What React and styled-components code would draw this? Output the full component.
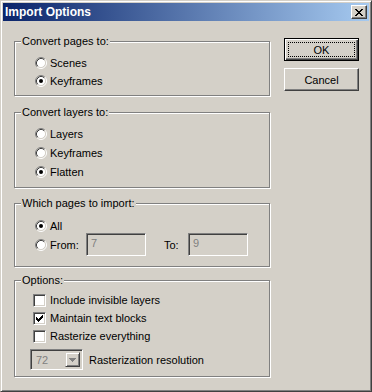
import styled, { createGlobalStyle } from "styled-components";

const GlobalStyle = createGlobalStyle`
  body {
    margin: 0;
    background: #d4d0c8;
    font-family: "Liberation Sans", Arial, sans-serif;
    font-size: 11px;
    color: #000;
  }
`;

const CHECK = [
  "......X",
  ".....XX",
  "X...XXX",
  "XX.XXX.",
  "XXXXX..",
  ".XXX...",
  "..X....",
];

const CROSS = [
  "XX....XX",
  ".XX..XX.",
  "..XXXX..",
  "...XX...",
  "..XXXX..",
  ".XX..XX.",
  "XX....XX",
];

const Pixels = ({ rows, color, w, h }) => (
  <svg width={w} height={h} viewBox={`0 0 ${w} ${h}`} shapeRendering="crispEdges">
    {rows.map((row, y) =>
      row.split("").map((c, x) =>
        c === "X" ? <rect key={`${x}-${y}`} x={x} y={y} width="1" height="1" fill={color} /> : null
      )
    )}
  </svg>
);

const RadioMark = ({ checked }) => (
  <RadioBox>
    <svg width="12" height="12" viewBox="0 0 12 12">
      <circle cx="6" cy="6" r="4.5" fill="#fff" />
      <path d="M2.11 9.89 A5.5 5.5 0 0 1 9.89 2.11" stroke="#808080" fill="none" />
      <path d="M9.89 2.11 A5.5 5.5 0 0 1 2.11 9.89" stroke="#fff" fill="none" />
      <path d="M2.82 9.18 A4.5 4.5 0 0 1 9.18 2.82" stroke="#404040" fill="none" />
      <path d="M9.18 2.82 A4.5 4.5 0 0 1 2.82 9.18" stroke="#d4d0c8" fill="none" />
      {checked && <circle cx="6" cy="6" r="2" fill="#000" />}
    </svg>
  </RadioBox>
);

const Radio = ({ checked, h, children }) => (
  <Row h={h}>
    <RadioMark checked={checked} />
    {children}
  </Row>
);

const Check = ({ checked, children }) => (
  <Row h={18}>
    <CheckBox>{checked && <Pixels rows={CHECK} color="#000" w={7} h={7} />}</CheckBox>
    <Label>{children}</Label>
  </Row>
);

const App = () => {
  return (
    <>
      <GlobalStyle />
      <Window>
        <TitleBar>
          <Title>Import Options</Title>
          <CloseButton>
            <Pixels rows={CROSS} color="#000" w={8} h={7} />
          </CloseButton>
        </TitleBar>
        <Content>
          <LeftCol>
            <Group mt={3} pt={12} pb={5}>
              <Legend>Convert pages to:</Legend>
              <Radio h={18}>
                <Label>Scenes</Label>
              </Radio>
              <Radio h={18} checked>
                <Label>Keyframes</Label>
              </Radio>
            </Group>

            <Group mt={16} pt={11} pb={6}>
              <Legend>Convert layers to:</Legend>
              <Radio h={19}>
                <Label>Layers</Label>
              </Radio>
              <Radio h={19}>
                <Label>Keyframes</Label>
              </Radio>
              <Radio h={19} checked>
                <Label>Flatten</Label>
              </Radio>
            </Group>

            <Group mt={15} pt={14} pb={10}>
              <Legend>Which pages to import:</Legend>
              <Radio h={15} checked>
                <Label>All</Label>
              </Radio>
              <Radio h={23}>
                <Label w={36}>From:</Label>
                <TextBox>7</TextBox>
                <Label w={24} ml={18}>To:</Label>
                <TextBox>9</TextBox>
              </Radio>
            </Group>

            <Group mt={13} pt={10} pb={6}>
              <Legend>Options:</Legend>
              <Check>Include invisible layers</Check>
              <Check checked>Maintain text blocks</Check>
              <Check>Rasterize everything</Check>
              <ComboRow>
                <Combo>
                  <ComboText>72</ComboText>
                  <ComboButton>
                    <Pixels rows={["XXXXXXX", ".XXXXX.", "..XXX..", "...X..."]} color="#808080" w={7} h={4} />
                  </ComboButton>
                </Combo>
                <Label>Rasterization resolution</Label>
              </ComboRow>
            </Group>
          </LeftCol>

          <RightCol>
            <Button isDefault>
              <FocusRing>OK</FocusRing>
            </Button>
            <Button>Cancel</Button>
          </RightCol>
        </Content>
      </Window>
    </>
  );
};

const Window = styled.div`
  box-sizing: border-box;
  width: 372px;
  height: 392px;
  padding: 2px;
  border: 1px solid;
  border-color: #d4d0c8 #404040 #404040 #d4d0c8;
  box-shadow: inset 1px 1px #fff, inset -1px -1px #808080;
  background: #d4d0c8;
`;

const TitleBar = styled.div`
  display: flex;
  align-items: center;
  justify-content: space-between;
  height: 18px;
  padding: 0 2px;
  background: linear-gradient(to right, #0a246a, #a6caf0);
`;

const Title = styled.span`
  color: #fff;
  font-weight: bold;
  font-size: 12px;
  line-height: 18px;
`;

const CloseButton = styled.div`
  box-sizing: border-box;
  display: flex;
  align-items: center;
  justify-content: center;
  width: 16px;
  height: 14px;
  background: #d4d0c8;
  border: 1px solid;
  border-color: #fff #404040 #404040 #fff;
  box-shadow: inset -1px -1px #808080;
  padding-top: 1px;
`;

const Content = styled.div`
  display: flex;
  padding: 17px 10px 0 11px;
`;

const LeftCol = styled.div`
  display: flex;
  flex-direction: column;
  width: 256px;
  margin-right: 14px;
`;

const RightCol = styled.div`
  display: flex;
  flex-direction: column;
  gap: 7px;
  width: 75px;
`;

const Group = styled.div`
  position: relative;
  display: flex;
  flex-direction: column;
  margin-top: ${(p) => p.mt}px;
  padding: ${(p) => p.pt}px 0 ${(p) => p.pb}px 19px;
  border: 1px solid #808080;
  box-shadow: inset 1px 1px #fff, 1px 1px #fff;
`;

const Legend = styled.span`
  position: absolute;
  top: -7px;
  left: 6px;
  padding: 0 1px;
  line-height: 13px;
  background: #d4d0c8;
`;

const Row = styled.div`
  display: flex;
  align-items: center;
  height: ${(p) => p.h}px;
`;

const RadioBox = styled.span`
  display: flex;
  width: 13px;
  height: 13px;
  align-items: center;
  justify-content: center;
  margin-right: 3px;
`;

const CheckBox = styled.span`
  box-sizing: border-box;
  display: flex;
  align-items: center;
  justify-content: center;
  width: 13px;
  height: 13px;
  margin-left: -1px;
  margin-right: 4px;
  background: #fff;
  border: 1px solid;
  border-color: #808080 #fff #fff #808080;
  box-shadow: inset 1px 1px #404040, inset -1px -1px #d4d0c8;
`;

const Label = styled.span`
  display: inline-block;
  width: ${(p) => (p.w ? `${p.w}px` : "auto")};
  margin-left: ${(p) => p.ml || 0}px;
  white-space: nowrap;
`;

const TextBox = styled.div`
  box-sizing: border-box;
  width: 60px;
  height: 23px;
  padding: 3px 4px;
  color: #808080;
  background: #d4d0c8;
  border: 1px solid;
  border-color: #808080 #fff #fff #808080;
  box-shadow: inset 1px 1px #404040, inset -1px -1px #d4d0c8;
`;

const ComboRow = styled.div`
  display: flex;
  align-items: center;
  gap: 6px;
  height: 21px;
  margin-top: 4px;
  margin-left: -4px;
`;

const Combo = styled.div`
  box-sizing: border-box;
  display: flex;
  align-items: center;
  justify-content: space-between;
  width: 53px;
  height: 21px;
  padding: 2px;
  background: #d4d0c8;
  border: 1px solid;
  border-color: #808080 #fff #fff #808080;
  box-shadow: inset 1px 1px #404040, inset -1px -1px #d4d0c8;
`;

const ComboText = styled.span`
  color: #808080;
  padding-left: 3px;
`;

const ComboButton = styled.div`
  box-sizing: border-box;
  display: flex;
  align-items: center;
  justify-content: center;
  width: 15px;
  height: 15px;
  border: 1px solid;
  border-color: #d4d0c8 #404040 #404040 #d4d0c8;
  box-shadow: inset 1px 1px #fff, inset -1px -1px #808080;
`;

const Button = styled.div`
  box-sizing: border-box;
  display: flex;
  align-items: center;
  justify-content: center;
  height: 23px;
  padding: 3px;
  background: #d4d0c8;
  border: 1px solid;
  border-color: ${(p) => (p.isDefault ? "#000" : "#fff #404040 #404040 #fff")};
  box-shadow: ${(p) =>
    p.isDefault
      ? "inset 1px 1px #fff, inset -1px -1px #404040, inset -2px -2px #808080"
      : "inset -1px -1px #808080"};
`;

const FocusRing = styled.div`
  box-sizing: border-box;
  display: flex;
  align-items: center;
  justify-content: center;
  width: 100%;
  height: 100%;
  border: 1px dotted #000;
`;

export default App;
